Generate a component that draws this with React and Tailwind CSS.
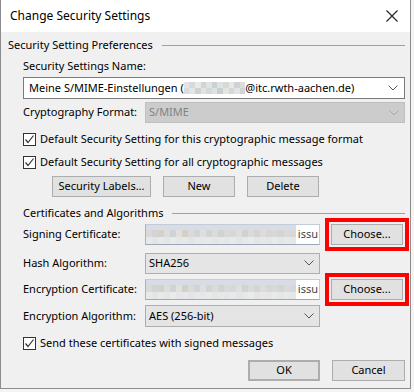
import React from "react";

// pixel-noise colours used for the blurred (redacted) parts
const NAME_TOP = ["#e2e4e6", "#d6dadc", "#e8e8e6", "#cfd6d4", "#dfe3e5", "#c9d1d6", "#e0e2e0", "#d5dad8", "#e6e6e4", "#cdd3d8", "#dcdcd8"];
const NAME_BOT = ["#d8dcdc", "#e4e6e6", "#ccd4d2", "#e2e2de", "#d2d8dc", "#dfe1e3", "#c7cfd2", "#e3e5e3", "#d4d8d6", "#e1e3e5", "#d0d4d4"];
const CERT_MID = ["#d9d9d8", "#d2d3d4", "#d6d1c8", "#dcdcdc", "#d0d3d5", "#e0e0e0", "#d4d0c8", "#dadada", "#d0d4d6", "#dcdedf", "#d3d3d3", "#dadcdc", "#d1d2d2", "#d9d9d9", "#d5d7d9", "#dededd", "#d2d2d2", "#dadad9", "#d4d4d4", "#dcdcdb", "#d6d6d6", "#d8d8d8", "#d3d5d5", "#dadada", "#d7d7d7"];
const CERT_LOW = ["#e6e8ea", "#e2e5e7", "#e8e9e9", "#e3e6e8", "#e9eaea", "#e4e6e8", "#e7e8e9", "#e2e4e6", "#e8e8e8", "#e5e7e9", "#e9e9e9", "#e3e5e7", "#e7e8e8", "#e4e6e7", "#e8e9ea", "#e2e5e6", "#e6e7e8", "#e9eaeb", "#e4e5e7", "#e7e7e8", "#e3e5e6", "#e8e9e9", "#e5e6e8", "#e7e8e9", "#e4e6e8"];

function Pixels({ colors, w }) {
  return (
    <div className="flex h-full">
      {colors.map((c, i) => (
        <span key={i} className="block h-full shrink-0" style={{ width: w, backgroundColor: c }} />
      ))}
    </div>
  );
}

function Chevron({ light }) {
  return (
    <svg width="10" height="6" viewBox="0 0 10 6" className="shrink-0">
      <path d="M0.5 0.5 L5 5 L9.5 0.5" fill="none" stroke={light ? "#a8a8a8" : "#555"} strokeWidth="1" />
    </svg>
  );
}

function Checkbox({ label }) {
  return (
    <div className="flex h-[14px] items-center">
      <div className="flex h-[13px] w-[13px] items-center justify-center border border-[#333] bg-white">
        <svg width="11" height="11" viewBox="0 0 11 11">
          <path d="M1.5 5.5 L4 8.5 L9.5 1.5" fill="none" stroke="#333" strokeWidth="1.2" />
        </svg>
      </div>
      <span className="ml-[4px]">{label}</span>
    </div>
  );
}

function Button({ children, className = "" }) {
  return (
    <button
      className={
        "flex h-[21px] items-center justify-center border border-[#adadad] bg-[#e1e1e1] text-black " +
        className
      }
    >
      {children}
    </button>
  );
}

function GroupHeader({ title, className = "" }) {
  return (
    <div className={"flex h-[14px] items-center pr-[5px] " + className}>
      <span>{title}</span>
      <div className="ml-[9px] h-px flex-1 bg-[#a0a0a0]" />
    </div>
  );
}

function Combo({ value, className = "" }) {
  return (
    <div
      className={
        "flex h-[21px] w-[175px] items-center justify-between border border-[#adadad] bg-[#e5e5e5] pl-[3px] pr-[5px] " +
        className
      }
    >
      <span>{value}</span>
      <Chevron />
    </div>
  );
}

function CertField() {
  return (
    <div className="flex h-[21px] w-[175px] border border-[#c3ccd8] border-b-[#9ca8b8] border-l-[#a9b4c2] bg-white">
      <div className="flex flex-1 flex-col overflow-hidden">
        <div className="h-[5px] bg-[#d8dde5]" />
        <div className="h-[7px]">
          <Pixels colors={CERT_MID} w={6} />
        </div>
        <div className="h-[7px]">
          <Pixels colors={CERT_LOW} w={6} />
        </div>
      </div>
      <span className="flex items-center bg-white pl-[2px] pr-[1px] text-[#444]">issu</span>
    </div>
  );
}

function Row({ label, children, className = "" }) {
  return (
    <div className={"flex items-center " + className}>
      <span className="w-[122px] shrink-0">{label}</span>
      {children}
    </div>
  );
}

export default function App() {
  return (
    <div className="h-[392px] w-[414px] bg-[#f4f4f4] font-['Noto_Sans',sans-serif] text-[11px] text-black">
      <div className="flex h-[389px] w-[411px] flex-col border-x border-b border-[#8c8c8c]">
        {/* ── 타이틀 바 ── */}
        <div className="flex h-[32px] shrink-0 items-center justify-between bg-white pl-[9px] pr-[11px]">
          <span className="text-[12px]">Change Security Settings</span>
          <svg width="14" height="14" viewBox="0 0 14 14">
            <path d="M1.5 1.5 L12.5 12.5 M12.5 1.5 L1.5 12.5" stroke="#222" strokeWidth="1.1" />
          </svg>
        </div>

        {/* ── 본문 ── */}
        <div className="flex flex-1 flex-col bg-[#f0f0f0] pl-[7px]">
          <GroupHeader title="Security Setting Preferences" className="mt-[6px]" />

          <div className="flex flex-col pl-[15px]">
            <div className="mt-[7px] flex h-[14px] items-center">Security Settings Name:</div>

            {/* 이름 콤보 */}
            <div className="mt-[4px] flex h-[22px] w-[382px] items-center justify-between border border-[#7a7a7a] bg-white pl-[5px] pr-[6px]">
              <div className="flex items-center">
                <span>Meine S/MIME-Einstellungen (</span>
                <div className="flex h-[12px] flex-col">
                  <div className="h-[6px]">
                    <Pixels colors={NAME_TOP} w={5.6} />
                  </div>
                  <div className="h-[6px]">
                    <Pixels colors={NAME_BOT} w={5.6} />
                  </div>
                </div>
                <span>@itc.rwth-aachen.de)</span>
              </div>
              <Chevron />
            </div>

            <Row label="Cryptography Format:" className="mt-[3px] h-[21px]">
              <div className="flex h-[21px] w-[260px] items-center justify-between border border-[#bfbfbf] bg-[#cccccc] pl-[3px] pr-[5px] text-[#838383]">
                <span>S/MIME</span>
                <Chevron light />
              </div>
            </Row>

            <div className="mt-[9px]">
              <Checkbox label="Default Security Setting for this cryptographic message format" />
            </div>
            <div className="mt-[9px]">
              <Checkbox label="Default Security Setting for all cryptographic messages" />
            </div>

            <div className="mt-[7px] flex gap-[12px] pl-[29px]">
              <Button className="w-[99px]">Security Labels...</Button>
              <Button className="w-[72px]">New</Button>
              <Button className="w-[72px]">Delete</Button>
            </div>

            {/* ── 인증서 및 알고리즘 ── */}
            <GroupHeader title="Certificates and Algorithms" className="mt-[9px]" />

            <Row label="Signing Certificate:" className="mt-[4px] h-[21px]">
              <CertField />
              <Button className="ml-[11px] w-[72px] outline-4 outline-offset-2 outline-solid outline-[#ff0000]">
                Choose...
              </Button>
            </Row>

            <Row label="Hash Algorithm:" className="mt-[8px] h-[20px]">
              <Combo value="SHA256" className="h-[20px]" />
            </Row>

            <Row label="Encryption Certificate:" className="mt-[6px] h-[21px]">
              <CertField />
              <Button className="ml-[11px] w-[72px] outline-4 outline-offset-2 outline-solid outline-[#ff0000]">
                Choose...
              </Button>
            </Row>

            <Row label="Encryption Algorithm:" className="mt-[5px] h-[22px]">
              <Combo value="AES (256-bit)" className="h-[22px]" />
            </Row>

            <div className="mt-[9px]">
              <Checkbox label="Send these certificates with signed messages" />
            </div>
          </div>

          {/* ── 확인/취소 ── */}
          <div className="mt-[10px] flex justify-end gap-[12px] pr-[5px]">
            <Button className="w-[72px] border-2 border-[#0078d7]">OK</Button>
            <Button className="w-[73px]">Cancel</Button>
          </div>
        </div>
      </div>
    </div>
  );
}
